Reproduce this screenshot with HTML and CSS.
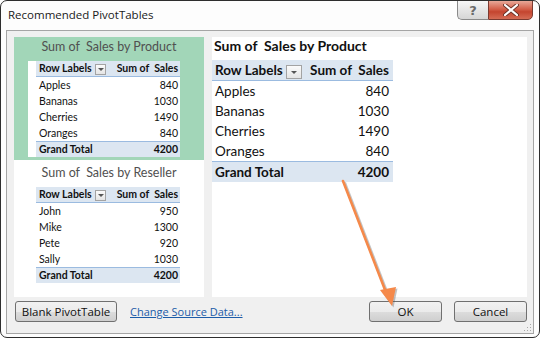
FILE: index.html
```html
<!DOCTYPE html>
<html lang="en">
<head>
    <meta charset="UTF-8">
    <title>Recommended PivotTables</title>
    <link rel="stylesheet" href="styles.css">
</head>
<body>

    <div class="window">
        <div class="titlebar">
            <span class="title">Recommended PivotTables</span>
            <div class="caption-buttons">
                <button class="cap help">?</button>
                <button class="cap close">
                    <svg width="16" height="12" viewBox="0 0 16 12">
                        <path d="M2 1 L14 11 M14 1 L2 11" stroke="#6a3328" stroke-width="4" stroke-linecap="round"/>
                        <path d="M2 1 L14 11 M14 1 L2 11" stroke="#ffffff" stroke-width="2.2" stroke-linecap="round"/>
                    </svg>
                </button>
            </div>
        </div>

        <div class="frame">
            <div class="panels">
                <div class="list">
                    <div class="item selected">
                        <div class="item-title">Sum of&nbsp; Sales by Product</div>
                        <div class="thumb">
                            <table class="mini">
                                <tr class="head">
                                    <td>Row Labels <span class="dropdown"></span></td>
                                    <td class="num">Sum of&nbsp; Sales</td>
                                </tr>
                                <tr><td>Apples</td><td class="num">840</td></tr>
                                <tr><td>Bananas</td><td class="num">1030</td></tr>
                                <tr><td>Cherries</td><td class="num">1490</td></tr>
                                <tr><td>Oranges</td><td class="num">840</td></tr>
                                <tr class="total"><td>Grand Total</td><td class="num">4200</td></tr>
                            </table>
                        </div>
                    </div>
                    <div class="item">
                        <div class="item-title">Sum of&nbsp; Sales by Reseller</div>
                        <div class="thumb">
                            <table class="mini">
                                <tr class="head">
                                    <td>Row Labels <span class="dropdown"></span></td>
                                    <td class="num">Sum of&nbsp; Sales</td>
                                </tr>
                                <tr><td>John</td><td class="num">950</td></tr>
                                <tr><td>Mike</td><td class="num">1300</td></tr>
                                <tr><td>Pete</td><td class="num">920</td></tr>
                                <tr><td>Sally</td><td class="num">1030</td></tr>
                                <tr class="total"><td>Grand Total</td><td class="num">4200</td></tr>
                            </table>
                        </div>
                    </div>
                </div>

                <div class="preview">
                    <div class="preview-title">Sum of&nbsp; Sales by Product</div>
                    <table class="pivot">
                        <tr class="head">
                            <td class="label-col">Row Labels <span class="dropdown"></span></td>
                            <td class="num">Sum of&nbsp; Sales</td>
                        </tr>
                        <tr><td>Apples</td><td class="num">840</td></tr>
                        <tr><td>Bananas</td><td class="num">1030</td></tr>
                        <tr><td>Cherries</td><td class="num">1490</td></tr>
                        <tr><td>Oranges</td><td class="num">840</td></tr>
                        <tr class="total"><td>Grand Total</td><td class="num">4200</td></tr>
                    </table>
                </div>
            </div>

            <div class="footer">
                <button class="btn blank">Blank PivotTable</button>
                <a class="link" href="#">Change Source Data...</a>
                <button class="btn ok">OK</button>
                <button class="btn cancel">Cancel</button>
            </div>

            <svg class="grip" width="8" height="8" viewBox="0 0 8 8">
                <rect x="6" y="0" width="1" height="1" fill="#a8a8a8"/>
                <rect x="3" y="3" width="1" height="1" fill="#a8a8a8"/>
                <rect x="6" y="3" width="1" height="1" fill="#a8a8a8"/>
                <rect x="0" y="6" width="1" height="1" fill="#a8a8a8"/>
                <rect x="3" y="6" width="1" height="1" fill="#a8a8a8"/>
                <rect x="6" y="6" width="1" height="1" fill="#a8a8a8"/>
            </svg>
        </div>

        <!-- callout arrow pointing to OK -->
        <svg class="arrow" width="540" height="338" viewBox="0 0 540 338">
            <g opacity="0.35" transform="translate(1.5 1.5)">
                <path d="M343 181 L387 295" stroke="#555" stroke-width="3"/>
                <path d="M380 290 L396 287 L392 306 Z" fill="#555"/>
            </g>
            <path d="M343 181 L387 295" stroke="#f5894a" stroke-width="2.6" stroke-linecap="round"/>
            <path d="M380 290 L396 287 L392 306 Z" fill="#f5894a"/>
        </svg>
    </div>

</body>
</html>
```

FILE: styles.css
```css
body {
    margin: 0;
    background-color: #ffffff;
    font-family: "Open Sans", "Noto Sans", sans-serif;
}
.window {
    position: relative;
    width: 540px;
    height: 338px;
    box-sizing: border-box;
    border: 1px solid #2e2e2e;
    border-radius: 7px;
    background-color: #fdfdfd;
    display: flex;
    flex-direction: column;
    overflow: hidden;
}
.titlebar {
    height: 29px;
    display: flex;
    align-items: flex-start;
    flex-shrink: 0;
}
.title {
    font-size: 11.5px;
    color: #1a1a1a;
    padding: 6px 0 0 7px;
    line-height: 16px;
}
.caption-buttons {
    margin-left: auto;
    margin-right: 6px;
    margin-top: -1px;
    display: flex;
}
.cap {
    height: 20px;
    border: 1px solid #8a8a8a;
    padding: 0;
    display: flex;
    align-items: center;
    justify-content: center;
}
.cap.help {
    width: 31px;
    border-right: none;
    border-radius: 0 0 0 5px;
    background: linear-gradient(#f7f7f7, #e4e4e4 55%, #d6d6d6);
    color: #6a6a6a;
    font-family: "DejaVu Sans", sans-serif;
    font-size: 13px;
    font-weight: bold;
}
.cap.close {
    width: 45px;
    border-color: #7a3a30;
    border-radius: 0 0 5px 0;
    background: linear-gradient(#e8a898, #d4604a 45%, #c4452f 60%, #d56c55);
}
.frame {
    position: relative;
    margin: 0 5px 3px 5px;
    flex: 1;
    border: 1px solid #a5a5a5;
    background-color: #f0f0f0;
    padding: 6px 6px 0 7px;
    display: flex;
    flex-direction: column;
}
.panels {
    height: 260px;
    display: flex;
    gap: 8px;
}
.list {
    width: 190px;
    background-color: #ffffff;
}
.item {
    padding-top: 3px;
    padding-bottom: 3px;
}
.item.selected {
    background-color: #a2d6b8;
    padding-top: 0;
}
.item-title {
    font-family: "Lato", "Liberation Sans", sans-serif;
    font-size: 12.5px;
    color: #505050;
    text-align: center;
    line-height: 20px;
    margin-bottom: 4px;
}
.thumb {
    margin-left: 14px;
    width: 152px;
    background-color: #ffffff;
    padding-left: 8px;
    box-sizing: border-box;
}
.mini {
    border-collapse: collapse;
    width: 144px;
    font-family: "Lato", "Liberation Sans", sans-serif;
    font-size: 10.5px;
    color: #111;
}
.mini td {
    height: 16px;
    padding: 0 2px 0 3px;
    white-space: nowrap;
    line-height: 15px;
}
.mini .head td,
.mini .total td {
    background-color: #dce6f1;
    font-weight: bold;
}
.mini .head td {
    border-bottom: 1px solid #9bbbe0;
    height: 15px;
}
.mini .total td {
    border-top: 1px solid #9bbbe0;
    height: 15px;
}
.num {
    text-align: right;
}
.mini .dropdown {
    width: 11px;
    height: 11px;
    margin-left: 1px;
}
.dropdown {
    display: inline-block;
    vertical-align: middle;
    box-sizing: border-box;
    border: 1px solid #a3a3a3;
    background: linear-gradient(#fbfbfb, #e4e4e4);
    position: relative;
}
.dropdown::after {
    content: "";
    position: absolute;
    left: 50%;
    top: 50%;
    margin-left: -3px;
    margin-top: -1px;
    border-left: 3px solid transparent;
    border-right: 3px solid transparent;
    border-top: 3px solid #555;
}
.preview {
    flex: 1;
    background-color: #ffffff;
}
.preview-title {
    font-family: "Lato", "Liberation Sans", sans-serif;
    font-size: 14px;
    font-weight: bold;
    color: #111;
    line-height: 18px;
    padding-left: 2px;
    margin-bottom: 5px;
}
.pivot {
    border-collapse: collapse;
    width: 181px;
    table-layout: fixed;
    font-family: "Lato", "Liberation Sans", sans-serif;
    font-size: 13.5px;
    color: #111;
}
.pivot td {
    height: 20px;
    padding: 0 4px 0 3px;
    white-space: nowrap;
    line-height: 18px;
}
.pivot .label-col {
    width: 86px;
    padding-right: 0;
}
.pivot .head td,
.pivot .total td {
    background-color: #dce6f1;
    font-weight: bold;
}
.pivot .head td {
    border-bottom: 1px solid #9bbbe0;
}
.pivot .total td {
    border-top: 1px solid #9bbbe0;
}
.pivot .dropdown {
    width: 16px;
    height: 14px;
    margin-left: 0;
}
.footer {
    margin-top: 4px;
    display: flex;
    align-items: center;
    padding-left: 1px;
}
.btn {
    height: 21px;
    box-sizing: border-box;
    border: 1px solid #707070;
    border-radius: 3px;
    background: linear-gradient(#f2f2f2, #ebebeb 50%, #dddddd 51%, #cfcfcf);
    font-family: "Open Sans", "Noto Sans", sans-serif;
    font-size: 11.5px;
    color: #111;
    padding: 0;
}
.btn.blank {
    width: 102px;
}
.link {
    margin-left: 13px;
    font-size: 11px;
    color: #1c5ca8;
    text-decoration: underline;
}
.btn.ok {
    margin-left: auto;
    width: 73px;
}
.btn.cancel {
    margin-left: 12px;
    width: 73px;
}
.grip {
    position: absolute;
    right: 1px;
    bottom: 1px;
}
.arrow {
    position: absolute;
    left: -1px;
    top: -1px;
    pointer-events: none;
}
```
